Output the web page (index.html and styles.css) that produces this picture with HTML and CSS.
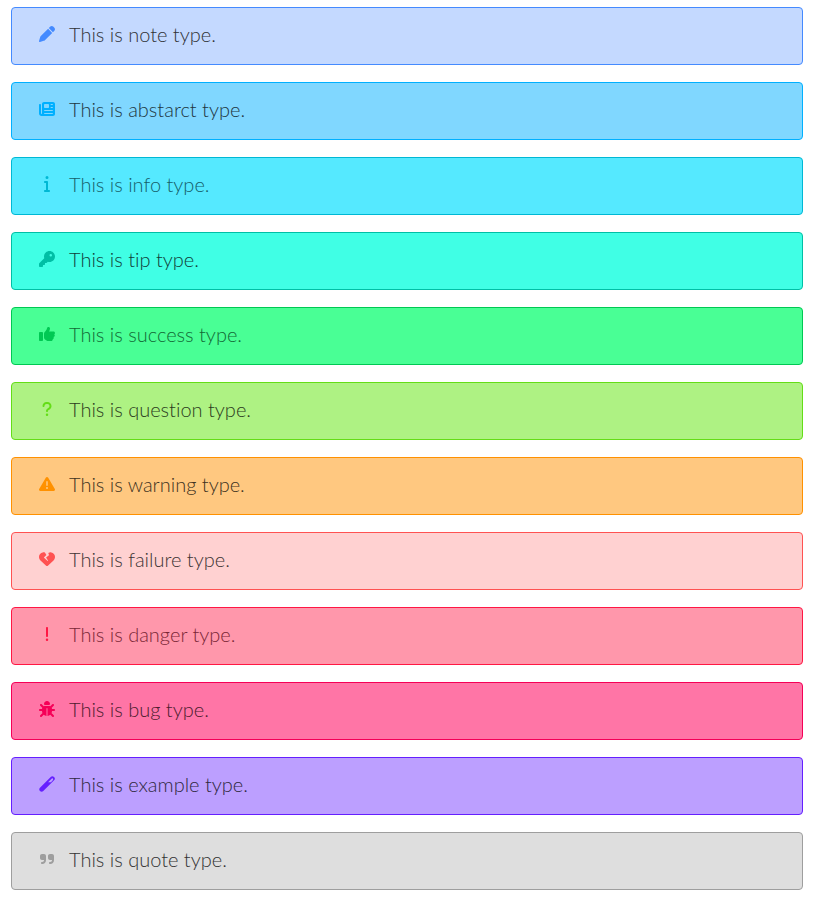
FILE: index.html
```html
<!DOCTYPE html>
<html lang="en">
<head>
<meta charset="utf-8">
<title>Callout types</title>
<link rel="stylesheet" href="styles.css">
</head>
<body>
<main class="callouts">
  <div class="callout note">
    <svg class="icon" viewBox="0 0 512 512" aria-hidden="true"><path d="M362.700 19.300 314.300 67.700 444.300 197.700 492.700 149.300c25-25 25-65.500 0-90.500L453.300 19.300c-25-25-65.500-25-90.500 0zM291.700 90.300 58.600 323.500c-10.400 10.400-18 23.300-22.200 37.400L1 481.200C-1.500 489.700.8 498.800 7 505s15.300 8.500 23.700 6.100l120.300-35.400c14.100-4.200 27-11.800 37.400-22.200L421.700 220.300z"/></svg>
    <p>This is note type.</p>
  </div>
  <div class="callout abstract">
    <svg class="icon" viewBox="0 0 512 512" aria-hidden="true"><path d="M96 96c0-35.300 28.700-64 64-64h288c35.300 0 64 28.700 64 64v320c0 35.300-28.700 64-64 64H80c-44.200 0-80-35.800-80-80V128c0-17.700 14.300-32 32-32s32 14.300 32 32v272c0 8.800 7.200 16 16 16s16-7.200 16-16zm64 24v80c0 13.300 10.700 24 24 24h112c13.300 0 24-10.700 24-24v-80c0-13.300-10.700-24-24-24H184c-13.300 0-24 10.700-24 24zm208-8c0 8.800 7.200 16 16 16h48c8.800 0 16-7.200 16-16s-7.200-16-16-16h-48c-8.800 0-16 7.200-16 16zm0 96c0 8.800 7.200 16 16 16h48c8.800 0 16-7.200 16-16s-7.200-16-16-16h-48c-8.800 0-16 7.200-16 16zm-208 96c0 8.800 7.200 16 16 16h256c8.800 0 16-7.200 16-16s-7.200-16-16-16H176c-8.800 0-16 7.200-16 16zm0 96c0 8.800 7.200 16 16 16h256c8.800 0 16-7.200 16-16s-7.200-16-16-16H176c-8.800 0-16 7.200-16 16z"/></svg>
    <p>This is abstarct type.</p>
  </div>
  <div class="callout info">
    <svg class="icon" viewBox="-160 0 512 512" aria-hidden="true"><path d="M48 48a48 48 0 1 1 96 0 48 48 0 1 1-96 0zM0 192c0-17.700 14.300-32 32-32h64c17.700 0 32 14.300 32 32v256h32c17.700 0 32 14.300 32 32s-14.300 32-32 32H32c-17.700 0-32-14.300-32-32s14.300-32 32-32h32V224H32c-17.700 0-32-14.300-32-32z"/></svg>
    <p>This is info type.</p>
  </div>
  <div class="callout tip">
    <svg class="icon" viewBox="0 0 512 512" aria-hidden="true"><path d="M336 352c97.200 0 176-78.800 176-176S433.200 0 336 0 160 78.800 160 176c0 18.700 2.900 36.800 8.300 53.700L7 391c-4.500 4.500-7 10.600-7 17v80c0 13.300 10.700 24 24 24h80c13.300 0 24-10.700 24-24v-40h40c13.300 0 24-10.700 24-24v-40h40c6.400 0 12.500-2.500 17-7l33.300-33.300c16.900 5.400 35 8.300 53.700 8.300zm40-256a40 40 0 1 1 0 80 40 40 0 1 1 0-80z"/></svg>
    <p>This is tip type.</p>
  </div>
  <div class="callout success">
    <svg class="icon" viewBox="0 0 512 512" aria-hidden="true"><path d="M313.400 32.900c26 5.200 42.900 30.500 37.700 56.500l-2.300 11.400c-5.300 26.700-15.100 52.100-28.800 75.200h144c26.500 0 48 21.500 48 48 0 18.500-10.500 34.600-25.900 42.600 10.900 8.800 17.900 22.300 17.900 37.400 0 23.400-16.800 42.900-38.900 47.100 4.400 7.300 6.900 15.800 6.900 24.900 0 21.300-13.900 39.400-33.100 45.600.7 3.300 1.100 6.800 1.100 10.400 0 26.500-21.500 48-48 48h-97.500c-19 0-37.500-5.600-53.300-16.100l-38.500-25.700C176 420.400 160 390.400 160 358.300V247.100c0-29.200 13.300-56.700 36-75l7.400-5.900c26.500-21.200 44.600-51 51.200-84.200l2.300-11.400c5.200-26 30.500-42.900 56.500-37.700zM32 192h64c17.700 0 32 14.300 32 32v224c0 17.700-14.300 32-32 32H32c-17.700 0-32-14.300-32-32V224c0-17.700 14.300-32 32-32z"/></svg>
    <p>This is success type.</p>
  </div>
  <div class="callout question">
    <svg class="icon" viewBox="-96 0 512 512" aria-hidden="true"><path d="M80 160c0-35.300 28.700-64 64-64h32c35.300 0 64 28.700 64 64v3.600c0 21.800-11.100 42.100-29.400 53.800l-42.200 27.100c-25.200 16.200-40.400 44.100-40.400 74v1.500c0 17.700 14.300 32 32 32s32-14.300 32-32v-1.400c0-8.200 4.200-15.800 11-20.200l42.200-27.100c36.600-23.600 58.800-64.100 58.800-107.700V160c0-70.700-57.300-128-128-128h-32C73.300 32 16 89.300 16 160c0 17.700 14.300 32 32 32s32-14.300 32-32zm80 320a40 40 0 1 0 0-80 40 40 0 1 0 0 80z"/></svg>
    <p>This is question type.</p>
  </div>
  <div class="callout warning">
    <svg class="icon" viewBox="0 0 512 512" aria-hidden="true"><path d="M256 32c14.200 0 27.300 7.500 34.500 19.800l216 368c7.300 12.400 7.300 27.700.2 40.100S486.300 480 472 480H40c-14.300 0-27.600-7.700-34.700-20.100s-7-27.800.2-40.100l216-368C228.700 39.500 241.800 32 256 32zm0 128c-13.300 0-24 10.700-24 24v112c0 13.300 10.700 24 24 24s24-10.700 24-24V184c0-13.300-10.700-24-24-24zm32 224a32 32 0 1 0-64 0 32 32 0 1 0 64 0z"/></svg>
    <p>This is warning type.</p>
  </div>
  <div class="callout failure">
    <svg class="icon" viewBox="0 0 512 512" aria-hidden="true"><path d="M119.400 44.100c23.300-3.900 46.800-1.900 68.600 5.300l49.800 77.500-75.400 75.400c-1.500 1.500-2.400 3.600-2.300 5.800s1 4.200 2.600 5.700l112 104c2.900 2.700 7.400 2.900 10.500.3s3.800-7 1.700-10.400l-60.400-98.100 90.700-75.600c2.600-2.100 3.500-5.700 2.400-8.800L296.800 61.800c28.500-16.700 62.400-23.200 95.700-17.600C461.500 55.600 512 115.200 512 185.100v5.800c0 41.500-17.200 81.200-47.600 109.500L283.700 469.100c-7.500 7-17.400 10.900-27.700 10.900s-20.200-3.900-27.700-10.900L47.600 300.400C17.200 272.100 0 232.400 0 190.900v-5.800c0-69.900 50.500-129.500 119.400-141z"/></svg>
    <p>This is failure type.</p>
  </div>
  <div class="callout danger">
    <svg class="icon" viewBox="-192 0 512 512" aria-hidden="true"><path d="M96 64c0-17.700-14.300-32-32-32S32 46.300 32 64v256c0 17.700 14.300 32 32 32s32-14.300 32-32V64zM64 480a40 40 0 1 0 0-80 40 40 0 1 0 0 80z"/></svg>
    <p>This is danger type.</p>
  </div>
  <div class="callout bug">
    <svg class="icon" viewBox="0 0 512 512" aria-hidden="true"><path d="M256 0c53 0 96 43 96 96v3.600c0 15.700-12.700 28.400-28.400 28.400H188.400c-15.700 0-28.400-12.700-28.400-28.400V96c0-53 43-96 96-96zM41.400 105.400c12.500-12.500 32.800-12.500 45.300 0l64 64c.7.700 1.300 1.400 1.900 2.100 14.200-7.300 30.400-11.400 47.500-11.400H312c17.100 0 33.200 4.100 47.500 11.400.6-.7 1.200-1.400 1.900-2.100l64-64c12.500-12.500 32.800-12.500 45.300 0s12.500 32.800 0 45.300l-64 64c-.7.700-1.400 1.300-2.100 1.900 6.200 12 10.100 25.300 11.100 39.500H480c17.700 0 32 14.300 32 32s-14.300 32-32 32h-64c0 24.600-5.500 47.800-15.400 68.600 2.200 1.300 4.200 2.900 6 4.800l64 64c12.500 12.500 12.500 32.800 0 45.300s-32.800 12.500-45.300 0l-63.100-63.100c-24.500 21.800-55.800 36.200-90.300 39.600V240c0-8.800-7.200-16-16-16s-16 7.200-16 16v239.200c-34.500-3.400-65.800-17.800-90.300-39.600L86.600 502.600c-12.500 12.500-32.800 12.500-45.300 0s-12.500-32.800 0-45.300l64-64c1.900-1.900 3.900-3.400 6-4.800C101.500 367.800 96 344.600 96 320H32c-17.700 0-32-14.300-32-32s14.300-32 32-32h64.300c1.100-14.100 5-27.500 11.100-39.500-.7-.6-1.400-1.200-2.100-1.900l-64-64c-12.500-12.500-12.500-32.800 0-45.300z"/></svg>
    <p>This is bug type.</p>
  </div>
  <div class="callout example">
    <svg class="icon" viewBox="0 0 512 512" aria-hidden="true"><path fill-rule="evenodd" d="M383 23c25-25 62-25 87 0l19 19c25 25 25 62 0 87L137 481c-31 31-75 31-106 0s-31-75 0-106zM426 65 291 200h92l64-74c8-10 8-20 0-28l-21-33z"/></svg>
    <p>This is example type.</p>
  </div>
  <div class="callout quote">
    <svg class="icon" viewBox="-32 0 512 512" aria-hidden="true"><path d="M448 296c0 66.300-53.700 120-120 120h-8c-17.700 0-32-14.300-32-32s14.300-32 32-32h8c30.900 0 56-25.100 56-56v-8h-64c-35.300 0-64-28.700-64-64v-64c0-35.300 28.700-64 64-64h64c35.300 0 64 28.700 64 64v136zm-256 0c0 66.300-53.700 120-120 120h-8c-17.700 0-32-14.300-32-32s14.300-32 32-32h8c30.900 0 56-25.100 56-56v-8H64c-35.300 0-64-28.700-64-64v-64c0-35.300 28.700-64 64-64h64c35.300 0 64 28.700 64 64v136z"/></svg>
    <p>This is quote type.</p>
  </div>
</main>
</body>
</html>
```
FILE: styles.css
```css
* {
  box-sizing: border-box;
}

body {
  margin: 0;
  background: #fff;
  font-family: Lato, "Liberation Sans", sans-serif;
  font-size: 20px;
  font-weight: 300;
  font-variant-ligatures: none;
  line-height: 28px;
}

.callouts {
  display: flex;
  flex-direction: column;
  gap: 17px;
  padding: 7px 13px 8px 11px;
}

.callout {
  display: flex;
  align-items: center;
  gap: 14px;
  padding: 12px 27px 16px;
  border: 1px solid var(--accent);
  border-radius: 4px;
  background: var(--fill);
  color: var(--text);
}

.callout p {
  margin: 0;
}

.icon {
  flex: none;
  width: 16px;
  height: 16px;
  fill: var(--accent);
}

.note {
  --accent: #448aff;
  --fill: #c4d9ff;
  --text: #303236;
}

.abstract {
  --accent: #00b0ff;
  --fill: #80d7ff;
  --text: #20363f;
}

.info {
  --accent: #00b8d4;
  --fill: #55e9ff;
  --text: #155f6a;
}

.tip {
  --accent: #00bfa5;
  --fill: #40ffe5;
  --text: #104039;
}

.success {
  --accent: #00c853;
  --fill: #49ff95;
  --text: #126a35;
}

.question {
  --accent: #64dd17;
  --fill: #aef283;
  --text: #2b3c20;
}

.warning {
  --accent: #ff9100;
  --fill: #ffc880;
  --text: #403220;
}

.failure {
  --accent: #ff5252;
  --fill: #ffd1d1;
  --text: #403434;
}

.danger {
  --accent: #ff1744;
  --fill: #ff97ab;
  --text: #7a2636;
}

.bug {
  --accent: #f50057;
  --fill: #ff75a6;
  --text: #4d1c2e;
}

.example {
  --accent: #651fff;
  --fill: #bc9fff;
  --text: #2f2840;
}

.quote {
  --accent: #9e9e9e;
  --fill: #dedede;
  --text: #333;
}
```
